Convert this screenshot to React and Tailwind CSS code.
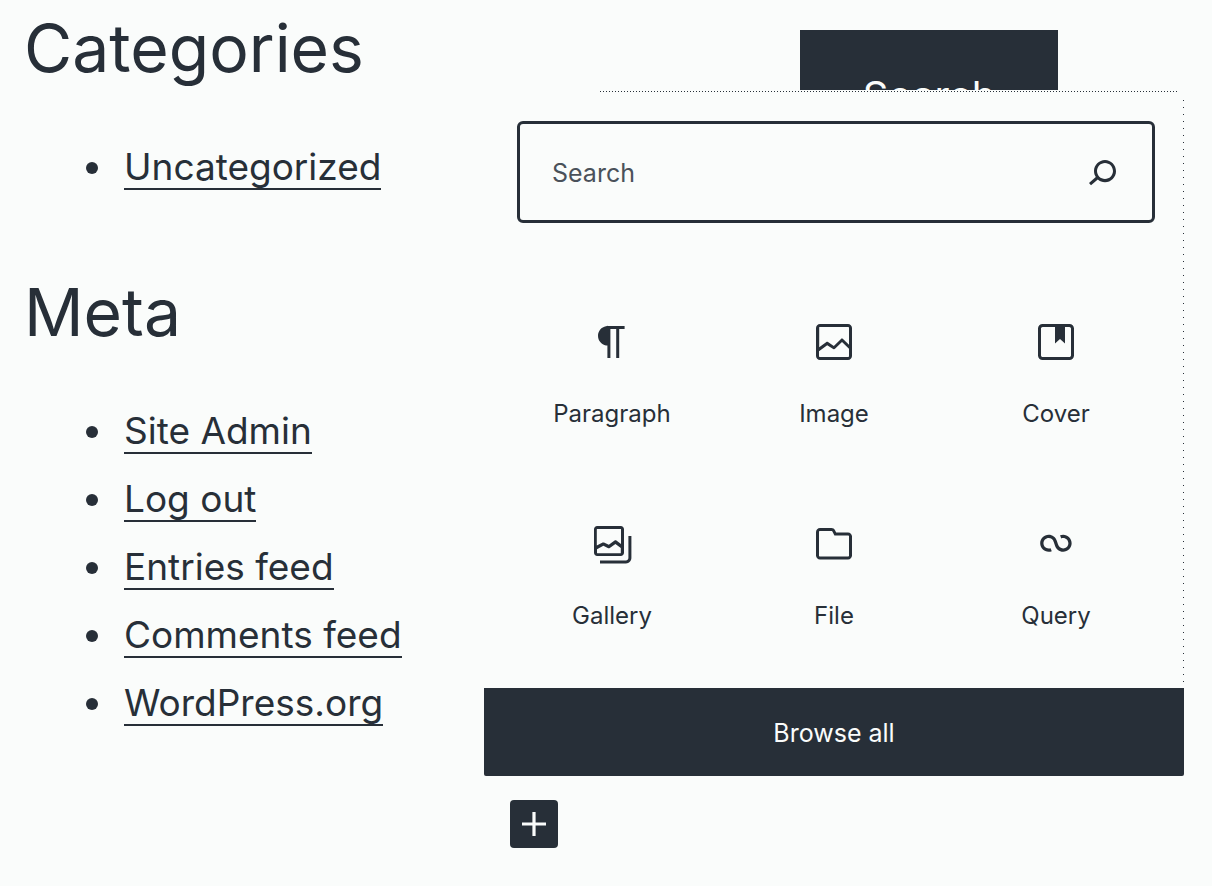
const ink = "text-[#272f38]";

function Icon({ d }) {
  return (
    <svg viewBox="0 0 24 24" className="size-12 shrink-0" fill="currentColor" aria-hidden="true">
      <path d={d} />
    </svg>
  );
}

const icons = {
  search:
    "M13.5 6C10.5 6 8 8.5 8 11.5c0 1.1.3 2.1.9 3l-3.4 3 1 1.1 3.4-2.9c1 .9 2.2 1.4 3.6 1.4 3 0 5.5-2.5 5.5-5.5C19 8.5 16.5 6 13.5 6zm0 9.5c-2.2 0-4-1.8-4-4s1.8-4 4-4 4 1.8 4 4-1.8 4-4 4z",
  plus: "M18 11.2h-5.2V6h-1.6v5.2H6v1.6h5.2V18h1.6v-5.2H18z",
};

const blocks = [
  {
    name: "Paragraph",
    d: "M18.3 4H9.9v-.1l-.9.2c-2.3.4-4 2.4-4 4.8s1.7 4.4 4 4.8l.7.1V20h1.5V5.5h2.9V20h1.5V5.5h2.7V4z",
  },
  {
    name: "Image",
    d: "M19 3H5c-1.1 0-2 .9-2 2v14c0 1.1.9 2 2 2h14c1.1 0 2-.9 2-2V5c0-1.1-.9-2-2-2zM5 4.5h14c.3 0 .5.2.5.5v8.4l-3-2.9c-.3-.3-.8-.3-1 0L11.9 14 9 12c-.3-.2-.6-.2-.8 0l-3.6 2.6V5c-.1-.3.1-.5.4-.5zm14 15H5c-.3 0-.5-.2-.5-.5v-2.4l4.1-3 3 1.9c.3.2.7.2.9-.1L16 12l3.5 3.4V19c0 .3-.2.5-.5.5z",
  },
  {
    name: "Cover",
    d: "M18.7 3H5.3C4 3 3 4 3 5.3v13.4C3 20 4 21 5.3 21h13.4c1.3 0 2.3-1 2.3-2.3V5.3C21 4 20 3 18.7 3zm.8 15.7c0 .4-.4.8-.8.8H5.3c-.4 0-.8-.4-.8-.8V5.3c0-.4.4-.8.8-.8h6.2v8.3l2.5-2.3 2.5 2.3V4.5h2.2c.4 0 .8.4.8.8v13.4z",
  },
  {
    name: "Gallery",
    d: "M20.2 8v11c0 .7-.6 1.2-1.2 1.2H6v1.5h13c1.5 0 2.7-1.2 2.7-2.8V8h-1.5zM18 16.4V4.6c0-.9-.7-1.6-1.6-1.6H4.6C3.7 3 3 3.7 3 4.6v11.8c0 .9.7 1.6 1.6 1.6h11.8c.9 0 1.6-.7 1.6-1.6zM4.5 4.6c0-.1.1-.1.1-.1h11.8c.1 0 .1.1.1.1V12l-2.3-1.7c-.3-.2-.6-.2-.9 0l-2.9 2.1L8 11.3c-.2-.1-.5-.1-.7 0l-2.9 1.5V4.6zm0 11.8v-1.8l3.2-1.7 2.4 1.2c.2.1.5.1.8-.1l2.8-2 2.7 2v2.5c0 .1-.1.1-.1.1H4.6c0-.1-.1-.2-.1-.2z",
  },
  {
    name: "File",
    d: "M19 6.2h-5.9l-.6-1.1c-.3-.7-1-1.1-1.8-1.1H5c-1.1 0-2 .9-2 2v11.8c0 1.1.9 2 2 2h14c1.1 0 2-.9 2-2V8.2c0-1.1-.9-2-2-2zm.5 11.6c0 .3-.2.5-.5.5H5c-.3 0-.5-.2-.5-.5V6c0-.3.2-.5.5-.5h5.8c.2 0 .4.1.4.3l1 2H19c.3 0 .5.2.5.5v9.5z",
  },
  {
    name: "Query",
    d: "M18.1823 11.6392C18.1823 13.0804 17.0139 14.2487 15.5727 14.2487C14.3579 14.2487 13.335 13.4179 13.0453 12.2922L13.0377 12.2625L13.0278 12.2335L12.3985 10.377L12.3942 10.3785C11.8571 8.64997 10.246 7.39405 8.33961 7.39405C5.99509 7.39405 4.09448 9.29465 4.09448 11.6392C4.09448 13.9837 5.99509 15.8843 8.33961 15.8843C8.88499 15.8843 9.40822 15.781 9.88943 15.5923L9.29212 14.0697C8.99812 14.185 8.67729 14.2487 8.33961 14.2487C6.89838 14.2487 5.73003 13.0804 5.73003 11.6392C5.73003 10.1979 6.89838 9.02959 8.33961 9.02959C9.55444 9.02959 10.5773 9.86046 10.867 10.9862L10.8772 10.9836L11.4695 12.7311C11.9515 14.546 13.6048 15.8843 15.5727 15.8843C17.9172 15.8843 19.8178 13.9837 19.8178 11.6392C19.8178 9.29465 17.9172 7.39404 15.5727 7.39404C15.0287 7.39404 14.5066 7.4968 14.0264 7.6847L14.6223 9.20781C14.9158 9.093 15.2358 9.02959 15.5727 9.02959C17.0139 9.02959 18.1823 10.1979 18.1823 11.6392Z",
  },
];

function LinkSection({ title, items }) {
  return (
    <section>
      <h2 className="text-[66px] leading-24">{title}</h2>
      <ul className="mt-[38px] pl-[62px]">
        {items.map((item) => (
          <li key={item} className="flex h-[68px] items-center gap-[26px]">
            <span className="size-3 shrink-0 rounded-full bg-[#272f38]" />
            <a
              href="#"
              className="border-b-2 border-[#272f38] text-[37px] leading-[42px] whitespace-nowrap"
            >
              {item}
            </a>
          </li>
        ))}
      </ul>
    </section>
  );
}

function Inserter() {
  return (
    <div
      role="dialog"
      aria-label="Block inserter"
      className="absolute inset-x-0 top-[90px] bg-[#fafcfb]"
    >
      <div className="mt-px mr-1.5 ml-29 h-px bg-[repeating-linear-gradient(to_right,#272f38_0_1px,transparent_1px_3px)]" />
      <div className="flex">
        <div className="min-w-0 flex-1 pt-[29px] pb-11">
          <div className="mr-7 ml-[33px] flex h-[102px] items-center rounded-md border-3 border-[#272f38] pr-[26px] pl-8">
            <input
              type="text"
              aria-label="Search for blocks"
              placeholder="Search"
              className="h-full min-w-0 flex-1 bg-transparent pt-0.5 text-[25px] outline-none placeholder:text-[#4a515a]"
            />
            <button type="button" aria-label="Submit block search">
              <Icon d={icons.search} />
            </button>
          </div>
          <div className="mt-[69px] mr-4 ml-[17px] grid grid-cols-3 gap-y-[52px]">
            {blocks.map((block) => (
              <button
                key={block.name}
                type="button"
                className="flex h-[150px] flex-col items-center gap-8 pt-[26px] text-[24px] leading-8"
              >
                <Icon d={block.d} />
                {block.name}
              </button>
            ))}
          </div>
        </div>
        <div className="mt-2 mb-1 w-px bg-[repeating-linear-gradient(to_bottom,#272f38_0_1px,transparent_1px_7px)]" />
      </div>
      <button
        type="button"
        className="block h-22 w-full rounded-b-xs bg-[#272f38] pt-1 text-[25px] text-[#fafcfb]"
      >
        Browse all
      </button>
    </div>
  );
}

export default function App() {
  return (
    <div
      className={`flex min-h-screen bg-[#fafcfb] font-['Inter','Liberation_Sans',sans-serif] ${ink}`}
    >
      <aside className="flex w-121 shrink-0 flex-col gap-[62px] pl-6">
        <LinkSection title="Categories" items={["Uncategorized"]} />
        <LinkSection
          title="Meta"
          items={["Site Admin", "Log out", "Entries feed", "Comments feed", "WordPress.org"]}
        />
      </aside>
      <main className="relative mr-7 flex flex-1 flex-col justify-between pt-[30px] pb-[38px]">
        <button
          type="button"
          className="mr-[126px] h-33 w-[258px] self-end bg-[#272f38] text-[40px] text-[#fafcfb]"
        >
          Search
        </button>
        <button
          type="button"
          aria-label="Add block"
          className="ml-[26px] size-12 self-start rounded-sm bg-[#272f38] text-[#fafcfb]"
        >
          <Icon d={icons.plus} />
        </button>
        <Inserter />
      </main>
    </div>
  );
}
